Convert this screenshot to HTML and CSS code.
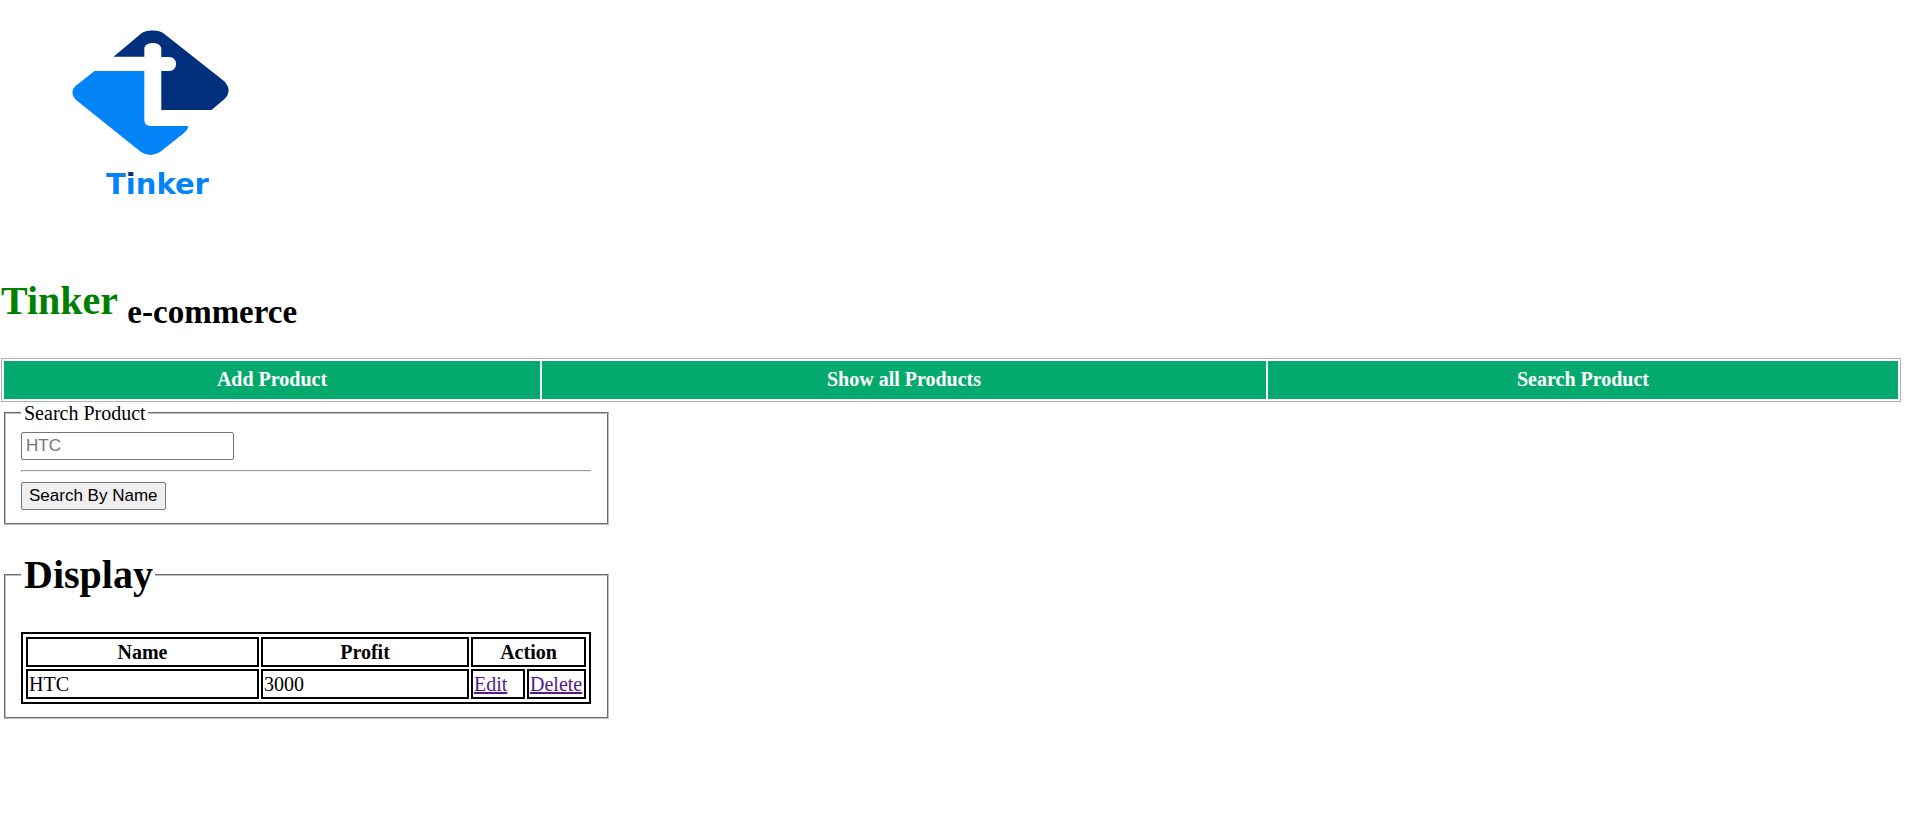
FILE: index.html
```html
<!DOCTYPE html>
<html lang="en">
<head>
<meta charset="utf-8">
<title>Tinker e-commerce</title>
<link rel="stylesheet" href="styles.css">
</head>
<body>
<header>
  <svg class="logo" viewBox="1 0 300 251" role="img" aria-label="Tinker logo">
    <defs>
      <linearGradient id="letter-i" gradientUnits="userSpaceOnUse" x1="0" y1="170" x2="0" y2="194">
        <stop offset="0.32" stop-color="#03307c"/>
        <stop offset="0.32" stop-color="#0284f8"/>
      </linearGradient>
    </defs>
    <path class="logo-navy" d="M113.5 56.7 L140 34.5 C145 29 160 29 165 34.5 L224 81 Q233 90.500 224.500 99 L211.500 110 H161.300 V71 H169 C178.500 71 178.500 57 169 57 H161.300 V49 C161.300 41 144.300 41 144.300 49 V56.700 Z"/>
    <path class="logo-blue" d="M94.500 71 H144.300 V120 Q144.500 125.800 151 126 H188.500 Q188 129.500 184 133 L160 152 Q150 158 141 152 L75.500 99.500 Q69 92 75.500 86 Z"/>
    <text class="logo-text" x="106" y="194">T<tspan fill="url(#letter-i)">i</tspan>nker</text>
  </svg>
  <h1><span class="brand">Tinker</span> <sub>e-commerce</sub></h1>
</header>
<nav class="menu">
  <a href="#add">Add Product</a>
  <a href="#display">Show all Products</a>
  <a href="#search">Search Product</a>
</nav>
<main class="panels">
  <form id="search">
    <fieldset class="search-box">
      <legend><label for="name">Search Product</label></legend>
      <input class="name-input" type="text" id="name" placeholder="HTC">
      <hr>
      <button class="search-button" type="button">Search By Name</button>
    </fieldset>
  </form>
  <fieldset id="display">
    <legend><h1>Display</h1></legend>
    <table class="products">
      <colgroup><col class="col-name"><col class="col-profit"><col class="col-edit"><col></colgroup>
      <thead>
        <tr><th>Name</th><th>Profit</th><th colspan="2">Action</th></tr>
      </thead>
      <tbody>
        <tr><td>HTC</td><td>3000</td><td><a href="#edit">Edit</a></td><td><a href="#delete">Delete</a></td></tr>
      </tbody>
    </table>
  </fieldset>
</main>
</body>
</html>
```
FILE: styles.css
```css
body {
  margin: 0 5px 0 1px;
  background: #fff;
  color: #000;
  font-family: "Liberation Serif", "Times New Roman", serif;
  font-size: 20px;
}

.logo {
  display: block;
  width: 300px;
}

.logo-navy { fill: #03307c; }
.logo-blue { fill: #0284f8; }

.logo-text {
  fill: #0284f8;
  font: 900 29px "DejaVu Sans", sans-serif;
}

h1 {
  margin: 27px 0;
  font-size: 40px;
  line-height: 46px;
}

.brand { color: green; }

sub {
  font-size: 33px;
  line-height: 38px;
}

.menu {
  display: grid;
  grid-template-columns: 536fr 724fr 630fr;
  gap: 2px;
  padding: 2px;
  border: 1px solid #b2b2b2;
}

.menu a {
  padding: 7px 0 8px;
  background: #04aa6d;
  color: #fff;
  font-weight: bold;
  line-height: 23px;
  text-align: center;
  text-decoration: none;
}

.panels {
  box-sizing: border-box;
  width: 32%;
  padding-left: 3px;
}

fieldset {
  min-width: 0;
  margin: 0;
  padding: 7px 16px 13px 15px;
  border: 2px groove #c0c0c0;
}

.search-box { padding-top: 8px; }

legend {
  padding: 0 2px 0 3px;
  line-height: 22px;
}

.name-input,
.search-button {
  display: block;
  box-sizing: border-box;
  height: 28px;
  border: 1px solid #767676;
  border-radius: 2px;
  font-family: "Liberation Sans", Arial, sans-serif;
  font-size: 17px;
}

.name-input {
  width: 213px;
  padding: 0 4px;
}

.name-input::placeholder { color: #757575; }

.search-button {
  padding: 0 7px;
  background: #efefef;
  color: #000;
}

hr {
  margin: 10px 0;
  border: 1px inset #eee;
}

.products {
  width: 100%;
  padding: 1px;
  border: 2px solid #000;
  border-spacing: 2px;
  table-layout: fixed;
}

.products tr { height: 30px; }

.products th,
.products td {
  padding: 1px;
  border: 2px solid #000;
}

.products a { color: #551a8b; }

.col-name { width: 233px; }
.col-profit { width: 208px; }
.col-edit { width: 54px; }
```
